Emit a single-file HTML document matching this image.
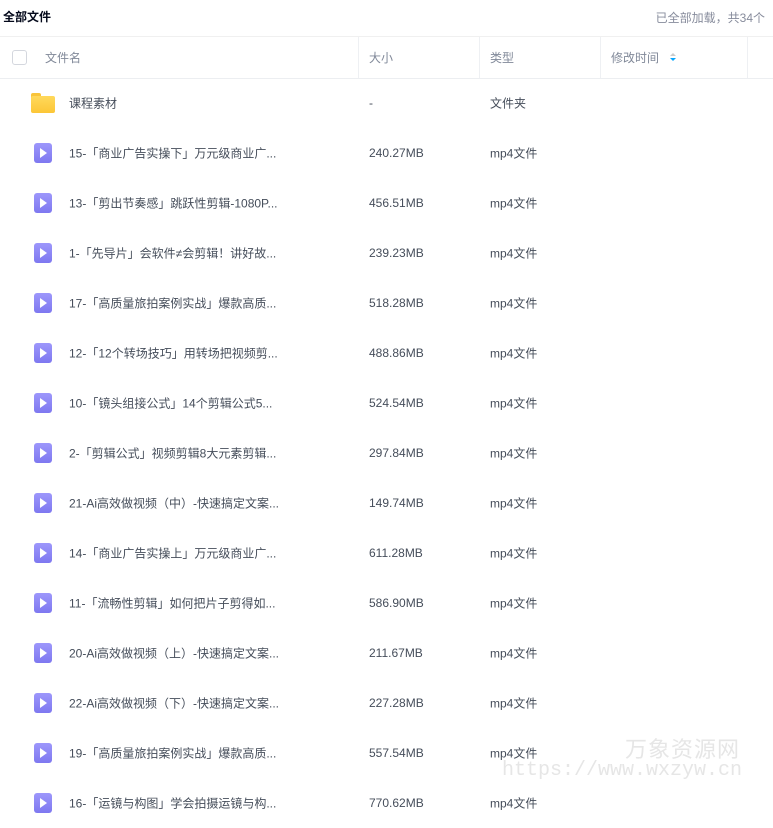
<!DOCTYPE html>
<html><head><meta charset="utf-8"><style>
body{margin:0;width:773px;height:804px;overflow:hidden;background:#fff;font-family:"Liberation Sans","Noto Sans CJK SC",sans-serif;font-size:12px;color:#454d5a;position:relative}
.t{position:absolute;white-space:nowrap}
.hd{position:absolute;top:36px;left:0;width:773px;height:41px;border-top:1px solid #f0f0f0;border-bottom:1px solid #eceef1}
.dv{position:absolute;top:0;width:1px;height:41px;background:#eef0f3}
.row{position:absolute;left:0;width:773px;height:50px}
.row .t{top:50%;transform:translateY(-50%)}
.vi{position:absolute;left:34px;width:18px;height:20px;border-radius:3px;background:linear-gradient(#9d97fb,#7e78f0);top:15px}
.vi:after{content:"";position:absolute;left:6px;top:5px;border-left:7px solid #fff;border-top:5px solid transparent;border-bottom:5px solid transparent}
</style></head><body>
<div class="t" style="left:3px;top:8px;font-weight:bold;font-size:12px;color:#03081a">全部文件</div>
<div class="t" style="right:8px;top:9px;color:#878c9c">已全部加载，共34个</div>
<div class="hd">
<div style="position:absolute;left:12px;top:13px;width:13px;height:13px;border:1px solid #d4d7de;border-radius:3px"></div>
<div class="t" style="left:45px;top:12px;color:#818999">文件名</div>
<div class="dv" style="left:358px"></div><div class="t" style="left:369px;top:12px;color:#818999">大小</div>
<div class="dv" style="left:479px"></div><div class="t" style="left:490px;top:12px;color:#818999">类型</div>
<div class="dv" style="left:600px"></div><div class="t" style="left:611px;top:12px;color:#818999">修改时间</div>
<div style="position:absolute;left:670px;top:16px;border:3px solid transparent;border-bottom-color:#ccc;border-top:0"></div>
<div style="position:absolute;left:670px;top:21px;border:3px solid transparent;border-top-color:#06a7ff;border-bottom:0"></div>
<div class="dv" style="left:747px"></div>
</div>
<div class="row" style="top:78px">
<div style="position:absolute;left:31px;top:15px;width:24px;height:20px"><div style="position:absolute;left:0;top:0;width:10px;height:5px;background:#f9c43a;border-radius:2px 2px 0 0"></div><div style="position:absolute;left:0;top:3px;width:24px;height:17px;background:linear-gradient(#ffd95b,#fcc637);border-radius:2px"></div></div>
<div class="t" style="left:69px">课程素材</div><div class="t" style="left:369px">-</div><div class="t" style="left:490px">文件夹</div></div>
<div id="rows"></div>
<div class="t" style="left:625px;top:732px;font-size:22px;color:#e6e6e6;letter-spacing:1px">万象资源网</div>
<div class="t" style="left:502px;top:759px;font-size:20px;color:#e6e6e6;font-family:'Liberation Mono',monospace">https://www.wxzyw.cn</div>
<script>
var d=[["15-「商业广告实操下」万元级商业广...","240.27MB"],["13-「剪出节奏感」跳跃性剪辑-1080P...","456.51MB"],["1-「先导片」会软件≠会剪辑！讲好故...","239.23MB"],["17-「高质量旅拍案例实战」爆款高质...","518.28MB"],["12-「12个转场技巧」用转场把视频剪...","488.86MB"],["10-「镜头组接公式」14个剪辑公式5...","524.54MB"],["2-「剪辑公式」视频剪辑8大元素剪辑...","297.84MB"],["21-Ai高效做视频（中）-快速搞定文案...","149.74MB"],["14-「商业广告实操上」万元级商业广...","611.28MB"],["11-「流畅性剪辑」如何把片子剪得如...","586.90MB"],["20-Ai高效做视频（上）-快速搞定文案...","211.67MB"],["22-Ai高效做视频（下）-快速搞定文案...","227.28MB"],["19-「高质量旅拍案例实战」爆款高质...","557.54MB"],["16-「运镜与构图」学会拍摄运镜与构...","770.62MB"]];
var h="";d.forEach(function(r,i){h+='<div class="row" style="top:'+(128+i*50)+'px"><div class="vi"></div><div class="t" style="left:69px">'+r[0]+'</div><div class="t" style="left:369px">'+r[1]+'</div><div class="t" style="left:490px">mp4文件</div></div>'});
document.getElementById("rows").outerHTML=h;
</script>
</body></html>
